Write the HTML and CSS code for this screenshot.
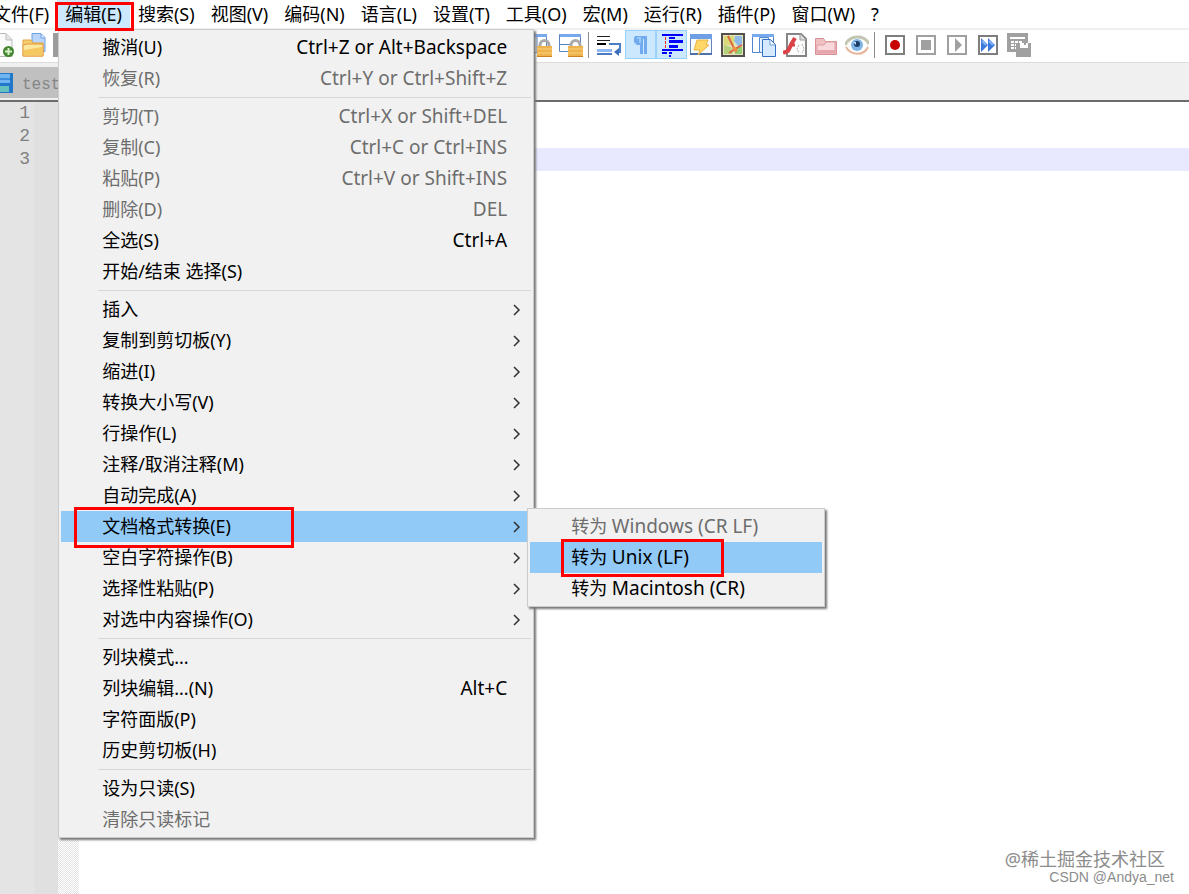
FILE: index.html
```
<!DOCTYPE html>
<html lang="zh-CN">
<head>
<meta charset="utf-8">
<title>test</title>
<link rel="stylesheet" href="styles.css">
</head>
<body>
<div class="app">
  <nav class="menubar" aria-label="主菜单">
    <button class="menu-title">文件(F)</button>
    <div class="menu-anchor">
      <button class="menu-title is-open" aria-expanded="true">编辑(E)</button>
      <span class="marker marker-title"></span>
      <div class="popup" role="menu">
        <button class="item" role="menuitem"><span>撤消(U)</span><span class="latin">Ctrl+Z or Alt+Backspace</span></button>
        <button class="item" role="menuitem" disabled><span>恢复(R)</span><span class="latin">Ctrl+Y or Ctrl+Shift+Z</span></button>
        <hr class="rule">
        <button class="item" role="menuitem" disabled><span>剪切(T)</span><span class="latin">Ctrl+X or Shift+DEL</span></button>
        <button class="item" role="menuitem" disabled><span>复制(C)</span><span class="latin">Ctrl+C or Ctrl+INS</span></button>
        <button class="item" role="menuitem" disabled><span>粘贴(P)</span><span class="latin">Ctrl+V or Shift+INS</span></button>
        <button class="item" role="menuitem" disabled><span>删除(D)</span><span class="latin">DEL</span></button>
        <button class="item" role="menuitem"><span>全选(S)</span><span class="latin">Ctrl+A</span></button>
        <button class="item" role="menuitem"><span>开始/结束 选择(S)</span></button>
        <hr class="rule">
        <button class="item has-sub" role="menuitem"><span>插入</span><svg class="arrow" viewBox="0 0 8 12"><path d="M1 1l5 5-5 5"/></svg></button>
        <button class="item has-sub" role="menuitem"><span>复制到剪切板(Y)</span><svg class="arrow" viewBox="0 0 8 12"><path d="M1 1l5 5-5 5"/></svg></button>
        <button class="item has-sub" role="menuitem"><span>缩进(I)</span><svg class="arrow" viewBox="0 0 8 12"><path d="M1 1l5 5-5 5"/></svg></button>
        <button class="item has-sub" role="menuitem"><span>转换大小写(V)</span><svg class="arrow" viewBox="0 0 8 12"><path d="M1 1l5 5-5 5"/></svg></button>
        <button class="item has-sub" role="menuitem"><span>行操作(L)</span><svg class="arrow" viewBox="0 0 8 12"><path d="M1 1l5 5-5 5"/></svg></button>
        <button class="item has-sub" role="menuitem"><span>注释/取消注释(M)</span><svg class="arrow" viewBox="0 0 8 12"><path d="M1 1l5 5-5 5"/></svg></button>
        <button class="item has-sub" role="menuitem"><span>自动完成(A)</span><svg class="arrow" viewBox="0 0 8 12"><path d="M1 1l5 5-5 5"/></svg></button>
        <div class="sub-anchor">
          <button class="item has-sub is-active" role="menuitem" aria-expanded="true"><span>文档格式转换(E)</span><svg class="arrow" viewBox="0 0 8 12"><path d="M1 1l5 5-5 5"/></svg></button>
          <span class="marker marker-format"></span>
          <div class="popup submenu" role="menu">
            <button class="item" role="menuitem" disabled><span>转为 <span class="latin">Windows (CR LF)</span></span></button>
            <div class="sub-anchor">
              <button class="item is-active" role="menuitem"><span>转为 <span class="latin">Unix (LF)</span></span></button>
              <span class="marker marker-unix"></span>
            </div>
            <button class="item" role="menuitem"><span>转为 <span class="latin">Macintosh (CR)</span></span></button>
          </div>
        </div>
        <button class="item has-sub" role="menuitem"><span>空白字符操作(B)</span><svg class="arrow" viewBox="0 0 8 12"><path d="M1 1l5 5-5 5"/></svg></button>
        <button class="item has-sub" role="menuitem"><span>选择性粘贴(P)</span><svg class="arrow" viewBox="0 0 8 12"><path d="M1 1l5 5-5 5"/></svg></button>
        <button class="item has-sub" role="menuitem"><span>对选中内容操作(O)</span><svg class="arrow" viewBox="0 0 8 12"><path d="M1 1l5 5-5 5"/></svg></button>
        <hr class="rule">
        <button class="item" role="menuitem"><span>列块模式...</span></button>
        <button class="item" role="menuitem"><span>列块编辑...(N)</span><span class="latin">Alt+C</span></button>
        <button class="item" role="menuitem"><span>字符面版(P)</span></button>
        <button class="item" role="menuitem"><span>历史剪切板(H)</span></button>
        <hr class="rule">
        <button class="item" role="menuitem"><span>设为只读(S)</span></button>
        <button class="item" role="menuitem" disabled><span>清除只读标记</span></button>
      </div>
    </div>
    <button class="menu-title">搜索(S)</button>
    <button class="menu-title">视图(V)</button>
    <button class="menu-title">编码(N)</button>
    <button class="menu-title">语言(L)</button>
    <button class="menu-title">设置(T)</button>
    <button class="menu-title">工具(O)</button>
    <button class="menu-title">宏(M)</button>
    <button class="menu-title">运行(R)</button>
    <button class="menu-title">插件(P)</button>
    <button class="menu-title">窗口(W)</button>
    <button class="menu-title">?</button>
  </nav>

  <div class="toolbar" role="toolbar" aria-label="工具栏">
    <div class="tools tools-file">
      <button class="tool" aria-label="新建"><svg viewBox="0 0 24 24"><path d="M3 .5h12l6 6v17H3z" fill="#fafafa" stroke="#b9b9b9"/><path d="M15 1v6h6" fill="#e4e4e4" stroke="#bbb"/><circle cx="17.500" cy="18.500" r="5.500" fill="#43862f"/><path d="M14 18.500h7M17.500 15v7" stroke="#d9f2c5" stroke-width="2"/></svg></button>
      <button class="tool" aria-label="打开"><svg viewBox="0 0 24 24"><path d="M10 .5h9l4 4v14H10z" fill="#b9d5fa" stroke="#6f9fdf"/><path d="M19 1v4h4" fill="#e1eeff" stroke="#6f9fdf"/><path d="M1 7h8l2 3h10v13H1z" fill="#f5ce72" stroke="#e8a23c"/><path d="M1 23V12l4-1h16v12z" fill="#fbe7a0" stroke="#e29a38"/><path d="M2 17l18-3v8H2z" fill="#f5c95f"/></svg></button>
      <button class="tool" aria-label="保存"><svg viewBox="0 0 24 24"><path d="M0 0h24v24H0z" fill="#9c9c9c"/><path d="M5 2h14v8H5zM6 15h12v8H6z" fill="#eee"/></svg></button>
    </div>
    <div class="tools">
      <button class="tool" aria-label="同步垂直滚动"><svg viewBox="0 0 24 24"><path d="M.5 1.500h18v18H.5z" fill="#fff" stroke="#5c83c4"/><path d="M1 1h18v3H1z" fill="#79a7ec"/><path d="M9 4v15" stroke="#5c83c4"/><path d="M12 14v-2a4 4 0 0 1 9 0v2" fill="none" stroke="#aaa" stroke-width="3"/><path d="M9 13h15v11H9z" fill="#eeb34c"/><path d="M9 16h15M9 20h15" stroke="#f8d17c"/><path d="M9 23.500h15" stroke="#cb8421"/></svg></button>
      <button class="tool" aria-label="同步水平滚动"><svg viewBox="0 0 24 24"><path d="M.5 1.500h21v17H.5z" fill="#fff" stroke="#5c83c4"/><path d="M1 1h21v3H1z" fill="#79a7ec"/><path d="M1 11.500h11" stroke="#527fbe"/><path d="M12 14v-2a4 4 0 0 1 9 0v2" fill="none" stroke="#aaa" stroke-width="3"/><path d="M9 13h15v11H9z" fill="#eeb34c"/><path d="M9 16h15M9 20h15" stroke="#f8d17c"/><path d="M9 23.500h15" stroke="#cb8421"/></svg></button>
      <span class="divider"></span>
      <button class="tool" aria-label="自动换行"><svg viewBox="0 0 24 24"><path d="M0 3.500h13M0 7.500h13" stroke="#222"/><path d="M0 11h9" stroke="#000" stroke-width="2"/><path d="M12 11h11v8h-4" fill="none" stroke="#4a7fc3" stroke-width="2"/><path d="M17 19l5-4v8z" fill="#3b6fb7"/><path d="M0 16h15v3H0z" fill="#8eb9f4"/><path d="M0 21h15" stroke="#4c7bc1" stroke-width="2"/></svg></button>
      <button class="tool is-pressed" aria-label="显示所有字符" aria-pressed="true"><svg viewBox="0 0 24 24"><path d="M6 3h12v18h-3V6h-1v15h-3v-9H8L5 9V5z" fill="#72aaf0"/><path d="M8 5h3v5" fill="none" stroke="#97c8fa" stroke-width="2"/></svg></button>
      <button class="tool is-pressed" aria-label="显示缩进参考线" aria-pressed="true"><svg viewBox="0 0 24 24"><path d="M2 1h21v2H2zM9 4h6v2H9zM9 7h14v3H9zM9 12h9v3H9zM2 16h21v2H2zM2 19h5v2H2zM9 19h3v2H9zM9 22h2v2H9z" fill="#00f"/><path d="M5.500 4v12" stroke="#f22" stroke-dasharray="3 1"/></svg></button>
      <button class="tool" aria-label="用户自定义语言"><svg viewBox="0 0 24 24"><path d="M.5 1.500h21v19H.5z" fill="#f8fbff" stroke="#6385b8"/><path d="M0 1h22v5H0z" fill="#6f9fe4"/><path d="M0 21h22" stroke="#4d73a8" stroke-width="2"/><path d="M7 7h11l-2 5h3L8 22l2-5H4z" fill="#ffd767" stroke="#e9b246"/></svg></button>
      <button class="tool" aria-label="文档结构图"><svg viewBox="0 0 24 24"><path d="M1 1h22v22H1z" fill="#e4e4b8" stroke="#55504c" stroke-width="2"/><path d="M3 3h10v9H3z" fill="#d9d977"/><path d="M14 3h7v10h-4l-4-5z" fill="#8fbbe6"/><path d="M3 12l7 2 2 7H3z" fill="#b5cf7b"/><path d="M15 14h6v7h-7z" fill="#92ce74"/><path d="M7 3c3 6 4 9 8 16M21 12l-7 4-6 4" fill="none" stroke="#e06544" stroke-width="2"/><path d="M12 14l4 4" stroke="#ee953e" stroke-width="3"/></svg></button>
      <button class="tool" aria-label="文档列表"><svg viewBox="0 0 24 24"><path d="M.5 1.500h21v18H.5z" fill="#fff" stroke="#5484cb"/><path d="M0 1h22v3H0z" fill="#77a9ed"/><path d="M7.500 4.500h9v15h-9z" fill="#e6f1ff" stroke="#548bd3"/><path d="M10.500 6.500h8l5 5v12h-13z" fill="#d5e9ff" stroke="#376fc0"/><path d="M18 7v5h5" fill="#fff" stroke="#6b9edd"/></svg></button>
      <button class="tool" aria-label="函数列表"><svg viewBox="0 0 24 24"><path d="M4 1h14l5 5v17H4z" fill="#fcfcfc" stroke="#858585" stroke-width="2"/><path d="M17 1v6h6" fill="#ddd" stroke="#999"/><path d="M0 20l5-2 4-8 3-5" fill="none" stroke="#db4248" stroke-width="4"/><path d="M6 12h6" stroke="#db4248" stroke-width="3"/><path d="M16 12l-2 4 2 4M19 11l2 5-2 4" fill="none" stroke="#a4b3a8" stroke-dasharray="2 1"/></svg></button>
      <button class="tool" aria-label="文件夹工作区"><svg viewBox="0 0 24 24"><path d="M1.500 21.500v-16h8l2 3h11v13z" fill="#f0bfc2" stroke="#d99195"/><path d="M3 20v-8h7l2-3h9v11z" fill="#f8d8da" stroke="#de9da1"/><path d="M3 17h18v3H3z" fill="#e5a7ac"/></svg></button>
      <button class="tool" aria-label="监视文件"><svg viewBox="0 0 24 24"><path d="M0 13C5 2 19 1 24 11c-4 11-18 12-24 2z" fill="#fff"/><path d="M0 12C5 2 19 1 24 11" fill="none" stroke="#c3c6b2" stroke-width="3"/><path d="M1 14c5 9 18 9 22 0" fill="none" stroke="#e7b59d" stroke-width="2"/><circle cx="12" cy="12" r="6" fill="#7eb5e6"/><circle cx="12" cy="11" r="3" fill="#203f68"/><path d="M8 9h3v3" fill="#badcff"/></svg></button>
      <span class="divider"></span>
      <button class="tool" aria-label="开始录制"><svg viewBox="0 0 24 24"><path d="M3 3h18v18H3z" fill="#fff" stroke="#7e7e7e" stroke-width="2"/><circle cx="12" cy="12" r="5" fill="#c80000"/></svg></button>
      <button class="tool" aria-label="停止录制"><svg viewBox="0 0 24 24"><path d="M3 3h18v18H3z" fill="#fff" stroke="#a0a0a0" stroke-width="2"/><path d="M7 7h10v10H7z" fill="#a0a0a0"/></svg></button>
      <button class="tool" aria-label="播放宏"><svg viewBox="0 0 24 24"><path d="M3 3h18v18H3z" fill="#fff" stroke="#a0a0a0" stroke-width="2"/><path d="M10 5l7 7-7 7z" fill="#a0a0a0"/></svg></button>
      <button class="tool" aria-label="多次运行宏"><svg viewBox="0 0 24 24"><path d="M3 3h18v18H3z" fill="#fff" stroke="#7e7e7e" stroke-width="2"/><path d="M5 5l7 7-7 7zM12 5l7 7-7 7z" fill="#3a78dc"/><path d="M6 8l4 4M13 8l4 4" stroke="#80b1f4" stroke-width="2"/></svg></button>
      <button class="tool" aria-label="保存宏"><svg viewBox="0 0 24 24"><path d="M0 0h21v19H0z" fill="#a0a0a0"/><path d="M3 5h15" stroke="#fff" stroke-width="2"/><path d="M4 8h3v2H4zM8 8h3v2H8zM12 8h3v2h-3zM4 11h3v2H4zM8 11h2v2H8zM4 14h3v2H4zM8 14h2v2H8z" fill="#fff"/><path d="M9 10h15v14H9z" fill="#a0a0a0"/><path d="M13 10h8v5h-8z" fill="#fff"/><path d="M17 10h2v2h-2z" fill="#a0a0a0"/></svg></button>
    </div>
  </div>

  <div class="tabbar" role="tablist">
    <button class="tab" role="tab" aria-selected="true"><svg class="disk" viewBox="0 0 20 20"><path d="M0 0h20v20H0z" fill="#2178c8"/><path d="M4 1h13v9H4z" fill="#6fb5f2"/><path d="M4 5h13v2H4z" fill="#3d8bdb"/><path d="M4 13h12v6H4z" fill="#65c1bd"/></svg><span>test</span></button>
  </div>

  <main class="editor">
    <ol class="numbers"><li>1</li><li>2</li><li>3</li></ol>
    <div class="bookmarks"></div>
    <div class="folds"></div>
    <div class="code"><div class="line"></div><div class="line"></div><div class="line is-current"></div></div>
    <div class="watermark"><p class="credit">@稀土掘金技术社区</p><p class="author">CSDN @Andya_net</p></div>
  </main>
</div>
</body>
</html>
```
FILE: styles.css
```
* { box-sizing: border-box; }

body {
  margin: 0;
  font-family: "Noto Sans", "Noto Sans CJK SC", sans-serif;
  font-size: 18px;
  color: #000;
  overflow: hidden;
}

button {
  margin: 0;
  padding: 0;
  border: 0;
  background: none;
  font: inherit;
  color: inherit;
  white-space: nowrap;
}

.app { display: flex; flex-direction: column; height: 100vh; background: #fff; }

/* Menu bar */
.menubar {
  display: flex;
  height: 30px;
  margin-left: -15px;
  border-bottom: 2px solid #f0f0f0;
  flex: none;
}
.menu-title { padding: 0 8px; height: 28px; line-height: 28px; }
.menu-title.is-open { background: #cce8ff; }
.menu-anchor, .sub-anchor { position: relative; }

/* Drop-down menus */
.popup {
  position: absolute;
  z-index: 2;
  top: 29px;
  left: 1px;
  width: 476px;
  padding: 2px;
  border: 1px solid #ccc;
  background: #f1f1f1;
  box-shadow: 2px 2px 2px #777;
}
.item {
  display: flex;
  align-items: center;
  justify-content: space-between;
  width: 100%;
  height: 31px;
  padding: 0 24px 2px 41px;
  line-height: 28px;
}
.item:disabled { color: #6d6d6d; }
.item.has-sub { padding-right: 10px; }
.item.is-active { background: #91c9f7; }
.latin { font-size: 19px; }
.arrow { width: 8px; height: 12px; margin-top: 2px; fill: none; stroke: #333; stroke-width: 1.5; }
.rule { height: 7px; margin: 0 0 0 37px; border: 0; background: linear-gradient(#d7d7d7, #d7d7d7) 0 3px / 100% 1px no-repeat; }
.submenu { top: -3px; left: 466px; width: 298px; }

/* Highlight frames */
.marker { position: absolute; z-index: 3; border: 3px solid #f00; pointer-events: none; }
.marker-title { top: 2px; left: -2px; right: -4px; height: 29px; }
.marker-format { top: -4px; left: 13px; width: 220px; height: 41px; }
.marker-unix { top: -3px; left: 31px; width: 163px; height: 38px; }

/* Toolbar */
.toolbar { display: flex; flex: none; height: 33px; margin-left: -12px; border-bottom: 1px solid #dcdcdc; }
.tools { display: flex; align-items: flex-start; }
.tools-file { flex: none; width: 537px; }
.tool { display: flex; flex: none; align-items: center; justify-content: center; width: 31px; height: 29px; padding: 1px 1px 0 0; }
.tool svg { width: 24px; height: 24px; }
.tool.is-pressed { border: 1px solid #99d1ff; background: #cce8ff; padding: 0; }
.divider { flex: none; width: 1px; height: 26px; margin: 2px 5px 0 1px; background: #8c8c8c; }

/* Tabs */
.tabbar { display: flex; flex: none; height: 39px; padding: 4px 0 2px; background: #f0f0f0; border-bottom: 2px solid #6d6d6d; }
.tab { display: flex; align-items: center; gap: 9px; width: 120px; margin-left: -7px; background: #c0c0c0; color: #868686; font-family: "Liberation Mono", monospace; font-size: 16px; }
.tab span { padding-top: 4px; }
.disk { width: 20px; height: 20px; }

/* Editor */
.editor { position: relative; display: flex; flex: 1; min-height: 0; }
.numbers { width: 34px; margin: 0; padding: 0 4px 0 0; list-style: none; text-align: right; background: #e4e4e4; color: #808080; font-family: "Liberation Mono", monospace; font-size: 18px; line-height: 23px; }
.bookmarks { width: 24px; background: #e0e0e0; }
.folds { width: 21px; background: repeating-conic-gradient(#e4e4e4 0 25%, #fff 0 50%) 0 0 / 2px 2px; }
.code { flex: 1; }
.line { height: 23px; }
.line.is-current { background: #e8e8ff; }

.watermark { position: absolute; right: 15px; bottom: 8px; display: flex; flex-direction: column; color: #8c8c8c; }
.watermark p { margin: 0; }
.credit { padding-right: 9px; align-self: flex-end; font-size: 18px; line-height: 18px; }
.author { align-self: flex-end; font-family: "Liberation Sans", sans-serif; font-size: 14px; line-height: 18px; }
```
